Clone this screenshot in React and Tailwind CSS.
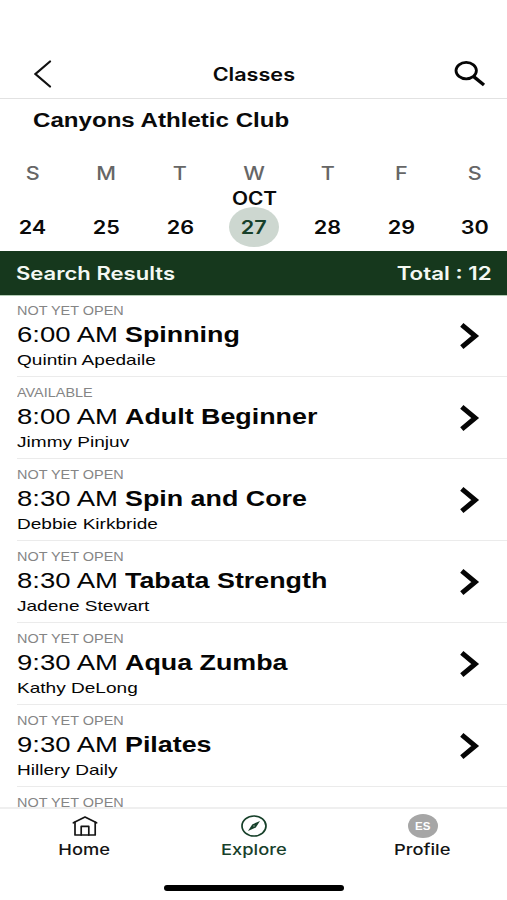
// Class schedule screen
// Week strip on top, list of classes for the selected day, tab bar at the bottom

const days = [
  { letter: 'S', date: 24 },
  { letter: 'M', date: 25 },
  { letter: 'T', date: 26 },
  { letter: 'W', date: 27, month: 'OCT', selected: true },
  { letter: 'T', date: 28 },
  { letter: 'F', date: 29 },
  { letter: 'S', date: 30 },
]

const classes = [
  { status: 'NOT YET OPEN', time: '6:00 AM', name: 'Spinning', coach: 'Quintin Apedaile' },
  { status: 'AVAILABLE', time: '8:00 AM', name: 'Adult Beginner', coach: 'Jimmy Pinjuv' },
  { status: 'NOT YET OPEN', time: '8:30 AM', name: 'Spin and Core', coach: 'Debbie Kirkbride' },
  { status: 'NOT YET OPEN', time: '8:30 AM', name: 'Tabata Strength', coach: 'Jadene Stewart' },
  { status: 'NOT YET OPEN', time: '9:30 AM', name: 'Aqua Zumba', coach: 'Kathy DeLong' },
  { status: 'NOT YET OPEN', time: '9:30 AM', name: 'Pilates', coach: 'Hillery Daily' },
]

function BackIcon() {
  return (
    <svg width="18" height="28" viewBox="0 0 18 28" fill="none" stroke="#111" strokeWidth="2.2" strokeLinecap="round">
      <path d="M16 1.5 1.5 14 16 26.5" />
    </svg>
  )
}

function SearchIcon() {
  return (
    <svg width="32" height="26" viewBox="0 0 32 26" fill="none" stroke="#050505">
      <ellipse cx="12.2" cy="9.6" rx="10.2" ry="8.2" strokeWidth="2.8" />
      <path d="M19.4 15.4 30 24" strokeWidth="3.4" />
    </svg>
  )
}

function ChevronIcon() {
  return (
    <svg width="20" height="28" viewBox="0 0 20 28" fill="none" stroke="#050505" strokeWidth="5">
      <path d="M1.8 2.8 15.2 14 1.8 25.2" />
    </svg>
  )
}

function HomeIcon() {
  return (
    <svg width="26" height="20" viewBox="0 0 26 20" fill="none" stroke="#141414" strokeWidth="1.7" strokeLinejoin="round" strokeLinecap="round">
      <path d="M1.4 6.8 13 1 24.6 6.8" />
      <path d="M3 6.4V19h20.2V6.4" />
      <path d="M9.2 19v-8.6h7.6V19" />
    </svg>
  )
}

function CompassIcon() {
  return (
    <svg width="26" height="22" viewBox="0 0 26 22">
      <ellipse cx="13" cy="11" rx="12" ry="10" fill="none" stroke="#17402a" strokeWidth="1.7" />
      <path d="M19 6 14.8 12.6 7 16 11.2 9.4Z" fill="#17402a" />
      <circle cx="13" cy="11" r="0.8" fill="#9db3a5" />
    </svg>
  )
}

function ClassRow({ item }) {
  return (
    <div className="ml-[17px] flex h-[82px] shrink-0 items-center justify-between border-b border-[#ebebeb] pr-[27px] text-[#050505]">
      <div className="flex h-full flex-col items-start whitespace-nowrap pt-[9px]">
        <span className="origin-left scale-x-[1.165] text-[12.4px] leading-[14px] text-[#858585]">{item.status}</span>
        <div className="flex h-[33px] items-center text-[22px]">
          <span className="w-[108px]">
            <span className="inline-block origin-left scale-x-[1.25]">{item.time}</span>
          </span>
          <span className="origin-left scale-x-[1.22] font-bold">{item.name}</span>
        </div>
        <span className="origin-left scale-x-[1.27] text-[15px] leading-[17px]">{item.coach}</span>
      </div>
      <ChevronIcon />
    </div>
  )
}

function Tab({ icon, label, active }) {
  return (
    <div className={`flex flex-col items-center ${active ? 'text-[#17402a]' : 'text-[#141414]'}`}>
      <div className="flex h-[24px] items-center">{icon}</div>
      <span className="mt-[3px] scale-x-[1.22] font-['Inter'] text-[15px] font-medium leading-[18px]">{label}</span>
    </div>
  )
}

export default function App() {
  return (
    <div className="flex h-[900px] w-[507px] flex-col overflow-hidden bg-white font-['Liberation_Sans',sans-serif] text-[#0a0a0a]">
      <header className="mt-[49px] grid h-[50px] shrink-0 grid-cols-3 items-center border-b border-[#e2e2e2] pl-[34px] pr-[21px]">
        <BackIcon />
        <h1 className="-ml-[13px] scale-x-[1.2] pt-[2px] text-center font-['Inter'] text-[18px] font-semibold">Classes</h1>
        <div className="flex justify-end">
          <SearchIcon />
        </div>
      </header>

      <div className="flex h-[65px] shrink-0 items-start pl-[33px] pt-[8px]">
        <h2 className="origin-left scale-x-[1.205] whitespace-nowrap text-[20px] font-bold leading-[26px]">Canyons Athletic Club</h2>
      </div>

      {/* Week strip */}
      <div className="-ml-[4px] -mr-[5px] grid h-[87px] shrink-0 grid-cols-7 font-['Inter'] text-[18px] font-semibold">
        {days.map((day) => (
          <div key={day.date} className="flex flex-col items-center">
            <span className="scale-x-[1.2] font-medium leading-[20px] text-[#666]">{day.letter}</span>
            <span className="mt-[4px] h-[19px] scale-x-[1.16] leading-[21px]">{day.month}</span>
            <div
              className={`flex h-[40px] w-[50px] items-center justify-center rounded-[50%] ${
                day.selected ? 'bg-[#cdd7d0] text-[#17402a]' : ''
              }`}
            >
              <span className="scale-x-[1.2]">{day.date}</span>
            </div>
          </div>
        ))}
      </div>

      <div className="relative flex h-[44px] shrink-0 items-center justify-between bg-[#16381d] pl-[16px] pr-[15px] font-['Inter'] text-[18px] font-semibold text-[#f4f8f3] shadow-[0_1px_0_#b4cdb6]">
        <span className="origin-left scale-x-[1.225]">Search Results</span>
        <span className="origin-right scale-x-[1.24]">Total : 12</span>
      </div>

      <div className="flex h-[512px] shrink-0 flex-col">
        {classes.map((item) => (
          <ClassRow key={item.name} item={item} />
        ))}
        {/* next row, only its status line shows above the tab bar */}
        <div className="ml-[17px] flex pt-[9px]">
          <span className="origin-left scale-x-[1.165] text-[12.4px] leading-[14px] text-[#858585]">NOT YET OPEN</span>
        </div>
      </div>

      <nav className="flex h-[93px] shrink-0 flex-col border-t-2 border-[#efefef]">
        <div className="grid grid-cols-3 pt-[5px]">
          <Tab icon={<HomeIcon />} label="Home" />
          <Tab icon={<CompassIcon />} label="Explore" active />
          <Tab
            icon={
              <span className="flex h-[24px] w-[30px] items-center justify-center rounded-[50%] bg-[#a6a6a6] text-[10px] font-bold text-white">
                <span className="scale-x-[1.15]">ES</span>
              </span>
            }
            label="Profile"
          />
        </div>
        <div className="ml-[164px] mt-[26px] h-[6px] w-[180px] rounded-full bg-black" />
      </nav>
    </div>
  )
}
